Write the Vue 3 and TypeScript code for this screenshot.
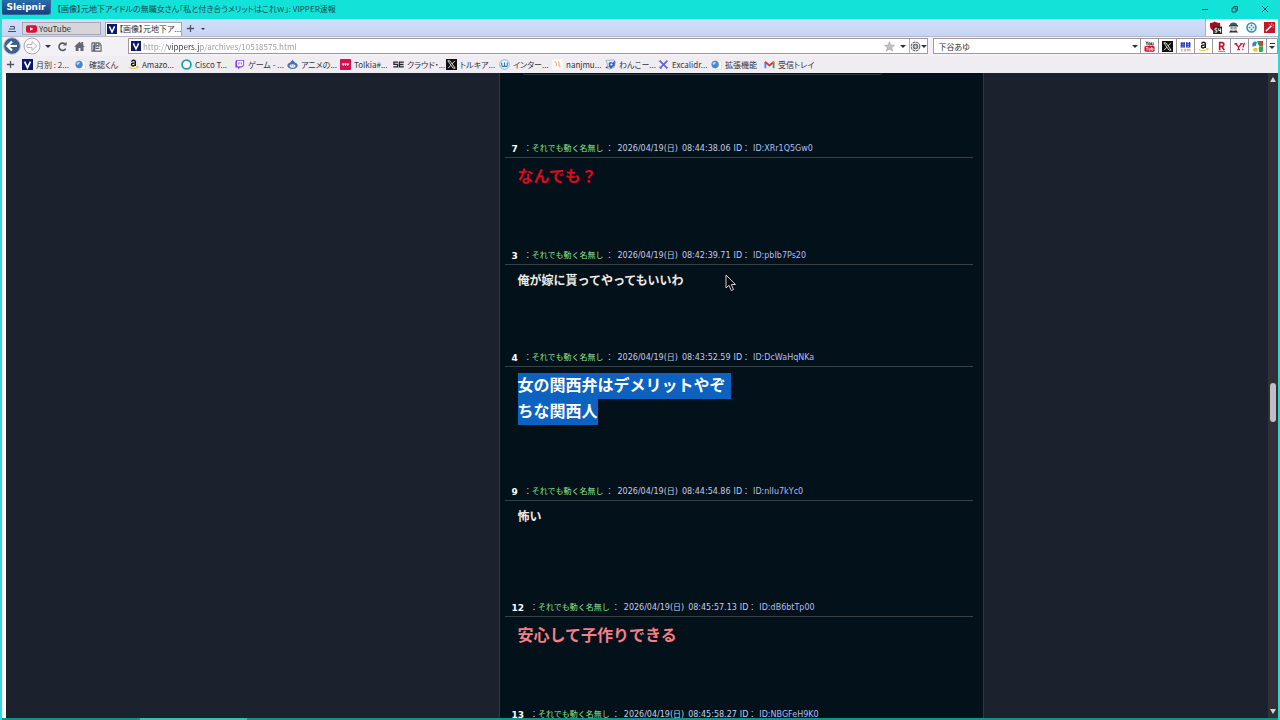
<script setup lang="ts">
import { ref } from 'vue'

interface Bookmark {
  icon: string
  label: string
}

interface Post {
  no: number
  time: string
  id: string
  lines: string[]
  tone: string
  selected?: boolean
}

const pageTitle = '【画像】元地下アイドルの無職女さん「私と付き合うメリットはこれｗ」: VIPPER速報'
const url = ref('http://vippers.jp/archives/10518575.html')
const query = ref('下谷あゆ')

const bookmarks: Bookmark[] = [
  { icon: 'v', label: '月別 : 2...' },
  { icon: 'globe', label: '確認くん' },
  { icon: 'amazon', label: 'Amazo...' },
  { icon: 'ring', label: 'Cisco T...' },
  { icon: 'twitch', label: 'ゲーム - ...' },
  { icon: 'anime', label: 'アニメの...' },
  { icon: 'tolkia', label: 'Tolkia#...' },
  { icon: 'se', label: 'クラウド・...' },
  { icon: 'x', label: 'トルキア...' },
  { icon: 'wp', label: 'インター...' },
  { icon: 'nanj', label: 'nanjmu...' },
  { icon: 'dog', label: 'わんこー...' },
  { icon: 'excali', label: 'Excalidr...' },
  { icon: 'globe', label: '拡張機能' },
  { icon: 'gmail', label: '受信トレイ' },
]

const engines: Bookmark[] = [
  { icon: 'youtube', label: 'YouTube' },
  { icon: 'x', label: 'X' },
  { icon: 'kakaku', label: '価格.com' },
  { icon: 'amazon', label: 'Amazon' },
  { icon: 'rakuten', label: 'Rakuten' },
  { icon: 'yahoo', label: 'Yahoo!' },
  { icon: 'google', label: 'Google' },
]

const extensions: Bookmark[] = [
  { icon: 'shield', label: 'Blocker' },
  { icon: 'face', label: 'User agent' },
  { icon: 'target', label: 'Gesture' },
  { icon: 'wand', label: 'Wand' },
]

const posts: Post[] = [
  { no: 7, time: '08:44:38.06', id: 'XRr1Q5Gw0', lines: ['なんでも？'], tone: 'big red' },
  { no: 3, time: '08:42:39.71', id: 'pbIb7Ps20', lines: ['俺が嫁に貰ってやってもいいわ'], tone: 'small' },
  { no: 4, time: '08:43:52.59', id: 'DcWaHqNKa', lines: ['女の関西弁はデメリットやぞ', 'ちな関西人'], tone: 'big double', selected: true },
  { no: 9, time: '08:44:54.86', id: 'nlIu7kYc0', lines: ['怖い'], tone: 'small roomy' },
  { no: 12, time: '08:45:57.13', id: 'dB6btTp00', lines: ['安心して子作りできる'], tone: 'big pink' },
  { no: 13, time: '08:45:58.27', id: 'NBGFeH9K0', lines: [], tone: 'small' },
]
</script>

<template>
  <div class="window">
    <svg class="sprite" aria-hidden="true">
      <symbol id="i-v" viewBox="0 0 12 12">
        <rect width="12" height="12" fill="#0b1767" />
        <path d="M2.8 2.8 6 9.6 9.2 2.8" fill="none" stroke="#fff" stroke-width="1.8" />
      </symbol>
      <symbol id="i-globe" viewBox="0 0 12 12">
        <path d="M5 1h4l2.500 2.500V11H5z" fill="#fff" stroke="#ccd2dc" stroke-width=".6" />
        <circle cx="4.500" cy="6" r="4" fill="#4a86cc" />
        <path d="M1.500 5q1.500-3 4-1.500l-1 2-2 1z" fill="#b5d5f3" />
      </symbol>
      <symbol id="i-amazon" viewBox="0 0 12 12">
        <path d="M4 3Q4.300 1.300 6 1.300 8 1.300 8 3V7.600M8 4.300Q3.800 4.100 3.800 6 3.800 7.600 5.400 7.600 7.300 7.600 8 5.800" fill="none" stroke="#151515" stroke-width="1.500" />
        <path d="M1 9q5 3.300 10-.3M9 8.300h2.200l-.6 2" fill="none" stroke="#edbb3c" stroke-width="1" />
      </symbol>
      <symbol id="i-ring" viewBox="0 0 12 12">
        <circle cx="6" cy="6" r="4.800" fill="#fff" stroke="#1a9fae" stroke-width="1.900" />
      </symbol>
      <symbol id="i-twitch" viewBox="0 0 12 12">
        <path d="M2.500 1H11v6L8.600 9.300H6.500L4.500 11.400V9.300H1.500V3z" fill="#8a3fe6" />
        <path d="M3.400 2H10v4.600L8.500 8H3.400z" fill="#fff" />
        <path d="M5.400 3.500v2.500M7.900 3.500v2.500" stroke="#8a3fe6" />
      </symbol>
      <symbol id="i-anime" viewBox="0 0 12 12">
        <path d="M6 .8 9 4q2.700.4 2.700 3.200Q11 11 6 11 1 11 .3 7.200.3 4.400 3 4z" fill="#4772b8" />
        <ellipse cx="6" cy="7.600" rx="3.200" ry="2" fill="#f5f5fa" />
        <path d="M4.500 7.500h.8M6.700 7.500h.8" stroke="#354879" />
      </symbol>
      <symbol id="i-tolkia" viewBox="0 0 12 12">
        <rect width="12" height="12" rx="1" fill="#d80c50" />
        <path d="M2 5.500h8M3.500 5v2.500M6 5v2.500M8.500 5v2.500" stroke="#fff" />
      </symbol>
      <symbol id="i-se" viewBox="0 0 12 12">
        <path d="M5.500 3.500H1v2.400h4V8.500H.3M11.800 3.500H7v5h4.800M7 6h4.500" fill="none" stroke="#252530" stroke-width="1.400" />
      </symbol>
      <symbol id="i-x" viewBox="0 0 12 12">
        <rect width="12" height="12" fill="#101010" />
        <path d="M2 2h2.300L10 10H7.700z" fill="none" stroke="#fff" stroke-width=".9" />
        <path d="M9.700 2 6.700 5.400M5.300 6.800 2.300 10" stroke="#fff" stroke-width=".9" />
      </symbol>
      <symbol id="i-wp" viewBox="0 0 12 12">
        <circle cx="6" cy="6" r="5.200" fill="#eef6fa" stroke="#6da5c9" stroke-width=".9" />
        <path d="M3 3.800v3Q3 8.300 4.500 8.300T6 6.800v-3M6 6.800q0 1.500 1.500 1.500T9 6.800v-3" fill="none" stroke="#2d78ad" stroke-width="1.200" />
      </symbol>
      <symbol id="i-nanj" viewBox="0 0 12 12">
        <rect width="12" height="12" fill="#fbf8f3" />
        <path d="M3 2.500 5 5 4.500 8M6.500 3q2 1.200 1 3.500L9 9" fill="none" stroke="#dfb689" stroke-width="1.100" />
      </symbol>
      <symbol id="i-dog" viewBox="0 0 12 12">
        <path d="M1 1.500 10 1l1.500 3L10 9l-5 2-4-1.500 2-3z" fill="#e4ecf8" stroke="#8393b8" stroke-width=".7" />
        <path d="M4 4.500q2-2 4-.5l3-2-.5 5-4 3.500q-2.500-1-2.500-6z" fill="#3563b8" />
        <circle cx="7" cy="6" r="1.200" fill="#fff" />
        <path d="M1 9.500 4 8.500" stroke="#3a3f55" />
      </symbol>
      <symbol id="i-excali" viewBox="0 0 12 12">
        <path d="M2 2 10 10M10.300 1.800 2 10.300" stroke="#6962d2" stroke-width="1.900" />
        <path d="M1 3 3 1M8.800 11 11 8.800M1.300 8.300l2.500 2.500" stroke="#6962d2" />
      </symbol>
      <symbol id="i-gmail" viewBox="0 0 12 12">
        <path d="M1.500 10V3.500" stroke="#4285f4" stroke-width="2" />
        <path d="M10.500 10V3.500" stroke="#34a853" stroke-width="2" />
        <path d="M1 3 6 7 11 3" fill="none" stroke="#dc3c32" stroke-width="2.200" />
        <path d="M9.800 3.500 11.400 2.300V5z" fill="#fbbc04" />
      </symbol>
      <symbol id="i-youtube" viewBox="0 0 12 12">
        <path d="M2 .5 3.200 2.600 4.400.5M3.200 2.600V5M5.200 2h1.600v2.500H5.200zM8.200 1.500v3h1.800v-3" fill="none" stroke="#222" stroke-width=".9" />
        <rect x=".5" y="5.500" width="11" height="6.300" rx="1.500" fill="#d5142b" />
        <path d="M2 7h2.600M3.300 7v3.500M5.400 7.500V10h1.400V7.500M8.200 6.500V10h1.600V8H8.200" fill="none" stroke="#fff" stroke-width=".8" />
      </symbol>
      <symbol id="i-kakaku" viewBox="0 0 12 12">
        <path d="M.5 2.500h5M.5 4.500h5M.5 6.500h5M2 1v6M4.500 1v6M6.500 2.500h5M6.500 4.500h5M6.500 6.500h5M7.500 1v6M10.500 1v6" stroke="#1730a8" stroke-width="1.100" />
        <path d="M3 9H1.500v2H3M4.700 9h1.600v2H4.700zM8 11.300V9h3v2.300M9.500 9v2.300" fill="none" stroke="#d79360" stroke-width=".8" />
      </symbol>
      <symbol id="i-rakuten" viewBox="0 0 12 12">
        <path d="M4 10V1.800h2.500q2 0 2 2t-2 2H4M6.300 5.800 9 10" fill="none" stroke="#c6142c" stroke-width="1.800" />
        <path d="M2.500 11.300h7.500" stroke="#c6142c" stroke-width=".7" />
      </symbol>
      <symbol id="i-yahoo" viewBox="0 0 12 12">
        <path d="M.5 3h3M1.800 3 5 6.500V9.500M3.500 9.500h3M5 6.500 8.200 3M6.800 3h2.700" fill="none" stroke="#d0163f" stroke-width="1.400" />
        <path d="M11.500 2 9.700 7M9 9.300h1.200" stroke="#d0163f" stroke-width="1.500" />
      </symbol>
      <symbol id="i-google" viewBox="0 0 12 12">
        <path d="M5.500 0H10q2 0 2 2v4H7.500z" fill="#2ca24c" />
        <path d="M7.500 0H12v4L8 5z" fill="#d93b36" />
        <path d="M7 6h5v4q0 2-2 2H8z" fill="#31a450" />
        <path d="M.5 2.500Q3-1 5.500 1.500L4 5.500.5 6z" fill="#357fcd" />
        <path d="M1 9q2-2.500 5-1v3.500H2z" fill="#edc234" />
        <circle cx="6.500" cy="6" r="1.500" fill="#fff" />
      </symbol>
      <symbol id="i-shield" viewBox="0 0 14 14">
        <path d="M1 2q3 .3 5-1.500Q8.500 2.200 12 2v4q-1 4-5 5.500Q2 10 1 6z" fill="#a30f1b" />
        <rect x="4.500" y="6" width="9.500" height="8" fill="#222" />
        <path d="M9 7.800H6.500v2H8.500V12H6M10.500 7.800v2.500h2.500M12.500 8v4.500" fill="none" stroke="#fff" />
      </symbol>
      <symbol id="i-face" viewBox="0 0 12 12">
        <path d="M2 4q0-3.500 4-3.500T10 4z" fill="#45525f" />
        <rect x="1" y="3.500" width="10" height="1.500" fill="#262e3a" />
        <path d="M2.500 5h7v3.500q-3.500 3-7 0z" fill="#e6c7b6" />
        <circle cx="4" cy="6.200" r="1.400" fill="#6aaac7" />
        <circle cx="8" cy="6.200" r="1.400" fill="#6aaac7" />
        <path d="M1 11.500 3 9 6 10 9 9 11 11.500z" fill="#27303c" />
      </symbol>
      <symbol id="i-target" viewBox="0 0 12 12">
        <circle cx="6" cy="6" r="4.900" fill="none" stroke="#3191b4" stroke-width="1.700" />
        <path d="M6 2.800v2M6 7.200v2M2.800 6h2M7.200 6h2" stroke="#238caf" stroke-width="1.700" />
      </symbol>
      <symbol id="i-wand" viewBox="0 0 12 12">
        <rect width="12" height="12" fill="#c01828" />
        <path d="M2 10 8 4" stroke="#fff" stroke-width="1.600" />
        <path d="M8.500 1v2M11 3.500H9.500M5 2l1 1M10 6 9 5" stroke="#fff" stroke-width=".7" />
      </symbol>
    </svg>

    <header class="titlebar">
      <button class="brand" type="button">Sleipnir</button>
      <h1 class="title">{{ pageTitle }}</h1>
      <div class="controls">
        <button type="button" aria-label="最小化">
          <svg viewBox="0 0 8 8"><path d="M1 4.500h6" /></svg>
        </button>
        <button type="button" aria-label="元に戻す">
          <svg viewBox="0 0 8 8"><path d="M1 3h4v4H1zM2.500 3V1.500h4v4H5" /></svg>
        </button>
        <button type="button" aria-label="閉じる">
          <svg viewBox="0 0 8 8"><path d="M1 1 7 7M7 1 1 7" /></svg>
        </button>
      </div>
    </header>

    <nav class="tabs" aria-label="タブ">
      <button class="tab-list" type="button" aria-label="タブ一覧">
        <svg viewBox="0 0 10 8"><path d="M3 1.500h4.500v2.500M2 4h6M1 6.500h8" /></svg>
      </button>
      <button class="tab" type="button">
        <svg viewBox="0 0 12 8" class="yt"><rect width="12" height="8" rx="2" fill="#d90e3b" /><path d="M4.500 2v4L8 4z" fill="#fff" /></svg>
        <span>YouTube</span>
      </button>
      <button class="tab active" type="button">
        <svg class="fav"><use href="#i-v" /></svg>
        <span>【画像】元地下ア...</span>
      </button>
      <button class="add" type="button" aria-label="新しいタブ">
        <svg viewBox="0 0 10 10"><path d="M5 1v8M1 5h8" /></svg>
      </button>
      <button class="arrow" type="button" aria-label="タブメニュー"><i class="caret"></i></button>
      <div class="extensions">
        <button v-for="e in extensions" :key="e.icon" type="button" :aria-label="e.label">
          <svg><use :href="'#i-' + e.icon" /></svg>
        </button>
      </div>
    </nav>

    <div class="toolbar">
      <div class="nav-buttons">
        <button type="button" aria-label="戻る">
          <svg class="round" viewBox="0 0 18 18">
            <circle cx="9" cy="9" r="8.300" fill="#3f608f" stroke="#b7bdc8" />
            <path d="M14 9H5M9 4.500 4.500 9 9 13.500" fill="none" stroke="#fff" stroke-width="2.200" />
          </svg>
        </button>
        <button type="button" aria-label="進む">
          <svg class="round" viewBox="0 0 18 18">
            <circle cx="9" cy="9" r="8" fill="#fafafc" stroke="#a9a9b0" />
            <path d="M4 7.500h5V4.500L13.800 9 9 13.500V10.500H4z" fill="#fff" stroke="#b5b5bc" />
          </svg>
        </button>
        <button class="slim" type="button" aria-label="履歴"><i class="caret"></i></button>
        <button type="button" aria-label="再読み込み">
          <svg class="glyph" viewBox="0 0 12 12">
            <path d="M9.500 8.500A4 4 0 1 1 8.500 3" fill="none" stroke="#555a64" stroke-width="1.800" />
            <path d="M6.500 4.800h4V.8z" fill="#555a64" />
          </svg>
        </button>
        <button type="button" aria-label="ホーム">
          <svg class="glyph" viewBox="0 0 12 12">
            <path d="M0 6.300 6 .8l2 1.800V1h2v3.500l2 1.800h-1.600V11H7V7.500H5V11H1.800V6.300z" fill="#626974" />
          </svg>
        </button>
        <button type="button" aria-label="メニュー">
          <svg class="glyph" viewBox="0 0 12 12">
            <path d="M1 2h3v9M1 2v9h10V4M3 11V4M5.500 2h3v4l-1.500-1-1.500 1zM5 8h4M10 2v3" fill="none" stroke="#59606b" stroke-width="1.200" />
          </svg>
        </button>
      </div>

      <div class="field address">
        <svg class="fav"><use href="#i-v" /></svg>
        <input v-model="url" class="url" type="text" aria-label="アドレス" spellcheck="false" />
        <button class="star" type="button" aria-label="お気に入りに追加">
          <svg viewBox="0 0 12 12"><path d="M6 .8 7.500 4.500 11.500 4.700 8.400 7.200 9.500 11 6 8.900 2.500 11 3.600 7.200.5 4.700 4.500 4.500z" fill="#c0c0c5" stroke="#9b9ba2" stroke-width=".6" /></svg>
        </button>
        <button class="slim" type="button" aria-label="アドレス履歴"><i class="caret"></i></button>
        <button class="engine" type="button" aria-label="エンジン切替">
          <svg viewBox="0 0 12 12">
            <circle cx="6" cy="6" r="4.700" fill="none" stroke="#676d78" stroke-width="1.300" stroke-dasharray="3 .7" />
            <circle cx="6" cy="6" r="2.600" fill="#8b93a0" stroke="#545b68" />
            <circle cx="6" cy="6" r="1" fill="#eef0f3" />
          </svg>
          <i class="caret"></i>
        </button>
      </div>

      <div class="field search">
        <input v-model="query" type="text" aria-label="検索" />
        <button class="slim" type="button" aria-label="検索履歴"><i class="caret"></i></button>
        <button v-for="e in engines" :key="e.icon" class="cell" type="button" :aria-label="e.label">
          <svg><use :href="'#i-' + e.icon" /></svg>
        </button>
        <button class="more" type="button" aria-label="その他"><i class="bar"></i><i class="caret"></i></button>
      </div>
    </div>

    <nav class="bookmarks" aria-label="ブックマーク">
      <button class="add" type="button" aria-label="ブックマークを追加">
        <svg viewBox="0 0 10 10"><path d="M5 1v8M1 5h8" /></svg>
      </button>
      <a v-for="b in bookmarks" :key="b.label" href="#">
        <svg><use :href="'#i-' + b.icon" /></svg>
        <span>{{ b.label }}</span>
      </a>
    </nav>

    <div class="viewport">
      <main class="page">
        <div class="column">
          <div class="previous"></div>
          <article v-for="p in posts" :key="p.no" class="post">
            <div class="head">
              <b>{{ p.no }}</b>
              <span class="name"><i>：</i>それでも動く名無し</span>
              <span class="sep">：</span>
              <span>2026/04/19(日)</span>
              <span class="time">{{ p.time }}</span>
              <span>ID：</span>
              <span class="uid">ID:{{ p.id }}</span>
            </div>
            <div class="body" :class="p.tone">
              <p v-for="(line, n) in p.lines" :key="line" :class="{ selected: p.selected, wrapped: p.selected && n < p.lines.length - 1 }">{{ line }}</p>
            </div>
          </article>
        </div>
        <svg class="pointer" viewBox="0 0 12 18" aria-hidden="true">
          <path d="M1 1V14L4 11.300 6.300 16.500 8.500 15.500 6.300 10.500H10.500z" fill="#05070c" stroke="#cfcfd4" />
        </svg>
      </main>
      <div class="scrollbar">
        <i class="up"></i>
        <div class="track"><div class="thumb"></div></div>
        <i class="down"></i>
      </div>
    </div>
    <footer class="edge"><div></div></footer>
  </div>
</template>

<style>
body {
  margin: 0;
  overflow: hidden;
}
</style>

<style scoped>
.window {
  display: flex;
  flex-direction: column;
  height: 100vh;
  box-sizing: border-box;
  border-left: 2px solid #35d8d6;
  border-right: 2px solid #25d9d4;
  background: #fff;
  color: #33343c;
  font: 8px/12px "Noto Sans CJK JP", "Open Sans", sans-serif;
  overflow: hidden;
}
.sprite {
  position: absolute;
  width: 0;
  height: 0;
}
svg {
  display: block;
  flex: none;
}
button,
input {
  margin: 0;
  padding: 0;
  border: 0;
  background: none;
  color: inherit;
  font: inherit;
}
button {
  display: flex;
  align-items: center;
  justify-content: center;
  flex: none;
}
input {
  min-width: 0;
  outline: none;
}
.caret {
  width: 0;
  height: 0;
  border: 3px solid transparent;
  border-top-color: #303038;
  border-bottom-width: 0;
}

.titlebar {
  display: flex;
  align-items: flex-start;
  height: 19px;
  flex: none;
  margin: 0 -2px;
  background: #12e2d8;
}
.brand {
  width: 50px;
  height: 15px;
  margin-left: 1px;
  border: 1px solid #2c6a9d;
  border-top: 0;
  border-radius: 0 0 3px 3px;
  background: linear-gradient(#2b6fa6, #143f86);
  color: #fff;
  font: bold 9px/14px "DejaVu Sans", sans-serif;
}
.title {
  flex: 1;
  margin: 2px 0 0 6px;
  overflow: hidden;
  color: #174a4e;
  font-size: 8px;
  font-weight: 400;
  line-height: 13px;
  font-feature-settings: "palt";
  white-space: nowrap;
}
.controls {
  display: flex;
}
.controls button {
  width: 30px;
  height: 18px;
}
.controls svg {
  width: 8px;
  height: 8px;
  fill: none;
  stroke: #105257;
}

.tabs {
  display: flex;
  align-items: flex-end;
  gap: 4px;
  height: 17px;
  flex: none;
  padding-left: 4px;
  background: linear-gradient(#d2defa, #c6d4f4);
}
.tab-list {
  width: 12px;
  height: 14px;
}
.tab-list svg {
  width: 10px;
  height: 8px;
  fill: none;
  stroke: #47505f;
}
.tab {
  width: 79px;
  height: 13px;
  margin-bottom: 1px;
  padding: 0 3px;
  box-sizing: border-box;
  justify-content: flex-start;
  gap: 2px;
  border: 1px solid #a9a9b3;
  background: #d8d5d9;
  line-height: 10px;
  white-space: nowrap;
  overflow: hidden;
  font-feature-settings: "palt";
}
.tab.active {
  width: 77px;
  height: 14px;
  margin-bottom: 0;
  padding: 0 0 1px 1px;
  border-bottom: 0;
  background: #fff;
}
.yt {
  width: 11px;
  height: 8px;
}
.fav {
  width: 10px;
  height: 10px;
}
.add svg {
  width: 9px;
  height: 9px;
  stroke: #4c5360;
  stroke-width: 1.4;
}
.tabs .add,
.tabs .arrow {
  height: 14px;
}
.tabs .add {
  padding-bottom: 2px;
  box-sizing: border-box;
}
.tabs .arrow {
  margin-left: 2px;
}
.arrow .caret {
  border-width: 2px;
  border-bottom-width: 0;
}
.extensions {
  display: flex;
  align-items: center;
  align-self: stretch;
  margin-left: auto;
  border-left: 1px solid #a8b0c5;
  background: #fff;
}
.extensions button {
  width: 18px;
}
.extensions svg {
  width: 11px;
  height: 11px;
}
.extensions button:first-child svg {
  width: 13px;
  height: 13px;
}

.toolbar {
  display: flex;
  align-items: center;
  height: 20px;
  flex: none;
  padding-bottom: 1px;
  border-top: 1px solid #b9bac8;
  box-sizing: border-box;
  background: #f3f1f5;
}
.nav-buttons {
  display: flex;
  align-items: center;
  gap: 2px;
  width: 126px;
  flex: none;
  padding-left: 1px;
  box-sizing: border-box;
}
.round {
  width: 18px;
  height: 18px;
}
.glyph {
  width: 11px;
  height: 11px;
}
.nav-buttons .glyph {
  margin: 0 2px;
}
.slim {
  width: 10px;
}
.field {
  display: flex;
  align-items: center;
  height: 16px;
  box-sizing: border-box;
  border: 1px solid #a19aa3;
  background: #fff;
}
.field button {
  align-self: stretch;
}
.address {
  flex: 1;
  padding-left: 2px;
  gap: 2px;
}
.search {
  width: 27%;
  flex: none;
  margin-left: 5px;
  padding-left: 4px;
}
.field input {
  flex: 1;
  height: 14px;
}
.field .url {
  background: linear-gradient(90deg, #96969e 23px, #34343c 23px, #34343c 57px, #96969e 57px);
  background-clip: text;
  -webkit-text-fill-color: transparent;
}
.search input {
  font-feature-settings: "palt";
}
.star svg,
.engine svg {
  width: 11px;
  height: 11px;
}
.address .slim {
  width: 12px;
}
.engine {
  width: 18px;
  margin-left: -2px;
  border-left: 1px solid #b4aeb6;
}
.cell {
  width: 18px;
  box-sizing: border-box;
  border-left: 1px solid #9b959d;
}
.cell svg {
  width: 11px;
  height: 11px;
}
.more {
  width: 11px;
  box-sizing: border-box;
  flex-direction: column;
  gap: 2px;
  border-left: 1px solid #9b959d;
}
.bar {
  width: 5px;
  height: 1px;
  background: #303038;
}

.bookmarks {
  display: flex;
  align-items: center;
  height: 17px;
  flex: none;
  padding-left: 4px;
  background: #efedf1;
}
.bookmarks .add {
  width: 16px;
  justify-content: flex-start;
}
.bookmarks a {
  display: flex;
  align-items: center;
  gap: 3px;
  width: 53px;
  flex: none;
  color: inherit;
  text-decoration: none;
  white-space: nowrap;
  font-feature-settings: "palt";
}
.bookmarks a svg {
  width: 11px;
  height: 11px;
}

.viewport {
  display: flex;
  flex: 1;
  min-height: 0;
  margin-left: 4px;
  background: #1b212d;
}
.page {
  position: relative;
  display: flex;
  flex: 1;
  justify-content: center;
  padding-left: 208px;
  overflow: hidden;
}
.column {
  width: 485px;
  height: 100%;
  box-sizing: border-box;
  padding: 0 10px 0 5px;
  border: 1px solid #303744;
  border-width: 0 1px;
  background: #03111a;
  overflow: hidden;
}
.previous {
  height: 1px;
  margin: 0 91px 64px 18px;
  border: 1px solid #343536;
  border-top: 0;
  border-radius: 0 0 3px 3px;
}
.head {
  display: flex;
  align-items: center;
  height: 16px;
  padding: 2px 0 0 7px;
  border-bottom: 1px solid #3a4243;
  color: #c5cbe6;
  font: 8px/16px "DejaVu Sans", "Noto Sans CJK JP", sans-serif;
  white-space: nowrap;
}
.head b {
  margin-right: 6px;
  color: #fff;
  font-size: 9px;
}
.head i {
  color: #c5cbe6;
  font-style: normal;
}
.name {
  color: #8fe287;
}
.sep {
  margin: 0 4px 0 2px;
}
.time {
  margin: 0 3px 0 4px;
}
.uid {
  margin-left: 3px;
  color: #b3bdf0;
}
.body {
  padding: 6px 0 56px 13px;
  color: #efe9e4;
  font-family: "Noto Sans CJK JP", sans-serif;
  font-weight: 700;
}
.body p {
  width: fit-content;
  margin: 0;
  padding-bottom: 4px;
}
.big {
  font-size: 16px;
  line-height: 22px;
}
.small {
  font-size: 12px;
  line-height: 17px;
}
.double {
  padding-bottom: 57px;
}
.roomy {
  padding-bottom: 70px;
}
.red {
  color: #dd0a1d;
}
.pink {
  color: #f47f87;
}
.body .selected {
  background: #0c62c0;
  color: #fff;
}
.body .wrapped {
  padding-right: 5px;
}
.pointer {
  position: absolute;
  left: 719px;
  top: 201px;
  width: 12px;
  height: 18px;
}

.scrollbar {
  display: flex;
  flex-direction: column;
  align-items: center;
  width: 10px;
  flex: none;
  padding: 4px 0;
  box-sizing: border-box;
  background: #303136;
}
.up,
.down {
  width: 0;
  height: 0;
  border: 3px solid transparent;
}
.up {
  border-top-width: 0;
  border-bottom: 5px solid #d5d5d8;
}
.down {
  border-bottom-width: 0;
  border-top: 5px solid #d5d5d8;
}
.track {
  display: flex;
  flex-direction: column;
  flex: 1;
  width: 6px;
}
.track::before {
  content: "";
  flex: 301;
}
.track::after {
  content: "";
  flex: 287;
}
.thumb {
  flex: 38;
  border-radius: 3px;
  background: #bfbfc1;
}
.edge {
  height: 2px;
  flex: none;
  margin: 0 -2px;
  padding-left: 11%;
  background: #15908b;
}
.edge div {
  width: 107px;
  height: 2px;
  background: #2fc2b5;
}
</style>
